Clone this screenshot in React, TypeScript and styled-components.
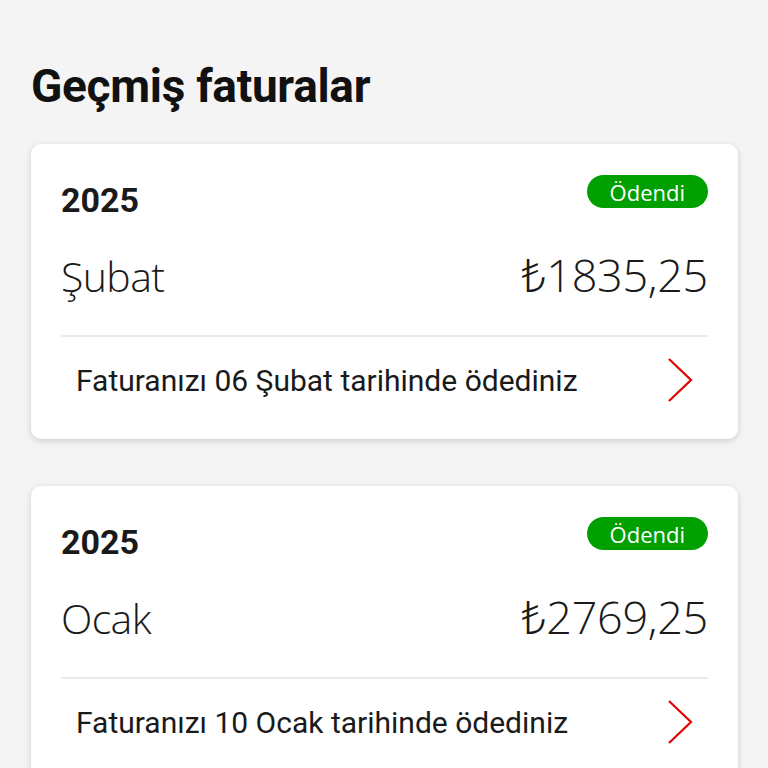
import { createGlobalStyle } from "styled-components";
import styled from "styled-components";

const GlobalStyle = createGlobalStyle`
  html, body {
    margin: 0;
    padding: 0;
    background: #f4f4f4;
  }
  body {
    font-family: Roboto, "Liberation Sans", sans-serif;
    color: #1a1a1a;
  }
`;

const Page = styled.main`
  padding: 58px 30px 0 31px;
  display: flex;
  flex-direction: column;
  gap: 47px;
`;

const Title = styled.h1`
  margin: 0 0 -17px 0;
  font-family: Roboto, "Liberation Sans", sans-serif;
  font-weight: 700;
  font-size: 46px;
  line-height: 56px;
  color: #111;
  letter-spacing: -0.3px;
`;

const Card = styled.section`
  background: #fff;
  border-radius: 10px;
  box-shadow: 0 2px 6px rgba(0, 0, 0, 0.16);
  padding: 31px 30px 16px 30px;
`;

const HeaderRow = styled.div`
  display: flex;
  align-items: flex-start;
  justify-content: space-between;
`;

const Year = styled.span`
  margin-top: 8px;
  font-weight: 700;
  font-size: 34px;
  line-height: 1;
  color: #1a1a1a;
`;

const Badge = styled.span`
  display: inline-flex;
  align-items: center;
  justify-content: center;
  height: 33px;
  padding: 0 23px;
  border-radius: 17px;
  background: ${({ color }) => color || "#00a000"};
  color: #fff;
  font-family: "Open Sans", "Noto Sans", sans-serif;
  font-size: 22px;
  font-weight: 400;
  line-height: 1;
`;

const AmountRow = styled.div`
  display: flex;
  align-items: baseline;
  justify-content: space-between;
  margin-top: 30px;
  padding-bottom: 31px;
  border-bottom: 2px solid #ebebeb;
  font-family: "Open Sans", "Noto Sans", sans-serif;
  font-weight: 300;
  line-height: 56px;
`;

const Month = styled.span`
  font-size: 41px;
  color: #1a1a1a;
  letter-spacing: -0.6px;
`;

const Amount = styled.span`
  font-size: 45px;
  color: #1a1a1a;
  letter-spacing: -0.3px;
`;

const Footer = styled.div`
  display: flex;
  align-items: center;
  justify-content: space-between;
  height: 86px;
  padding: 0 15px 0 15px;
`;

const FooterText = styled.span`
  font-size: 30px;
  color: #1a1a1a;
`;

const Chevron = () => (
  <svg width="26" height="46" viewBox="0 0 26 46" fill="none">
    <path d="M2 2 L24 23 L2 44" stroke="#e60000" strokeWidth="2.2" />
  </svg>
);

const bills = [
  { year: "2025", month: "Şubat", amount: "₺1835,25", day: "06" },
  { year: "2025", month: "Ocak", amount: "₺2769,25", day: "10" },
];

export default function App() {
  return (
    <>
      <GlobalStyle />
      <Page>
        <Title>Geçmiş faturalar</Title>
        {bills.map((bill, index) => (
          <Card key={index}>
            <HeaderRow>
              <Year>{bill.year}</Year>
              <Badge>Ödendi</Badge>
            </HeaderRow>
            <AmountRow>
              <Month>{bill.month}</Month>
              <Amount>{bill.amount}</Amount>
            </AmountRow>
            <Footer>
              <FooterText>
                Faturanızı {bill.day} {bill.month} tarihinde ödediniz
              </FooterText>
              <Chevron />
            </Footer>
          </Card>
        ))}
      </Page>
    </>
  );
}
